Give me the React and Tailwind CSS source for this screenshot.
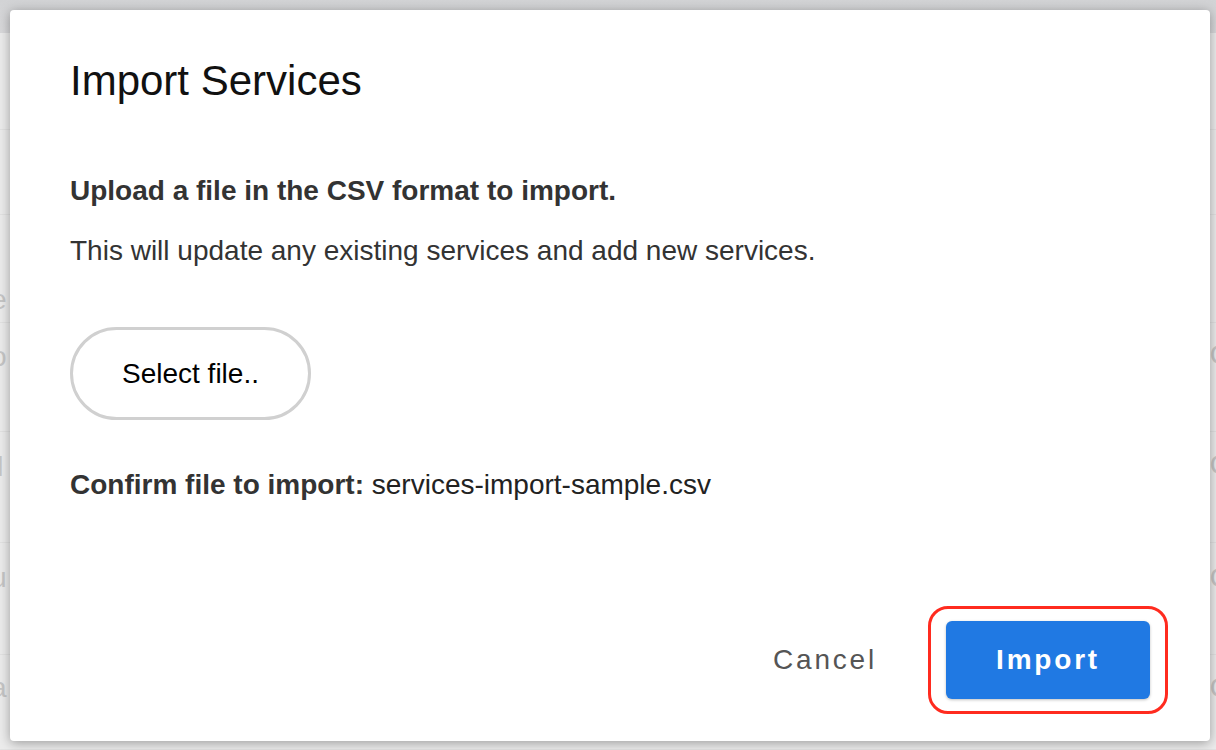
import React from "react";

// faint table behind the modal overlay; only slivers show at the edges
const rows = [
  { h: 97, left: "", right: "", lt: "mt-[20px]", rt: "mt-[20px]" },
  { h: 85, left: "", right: "", lt: "mt-[20px]", rt: "mt-[20px]" },
  { h: 108, left: "e", right: "i", lt: "mt-[71px]", rt: "mt-[21px]" },
  { h: 109, left: "o", right: "C", lt: "mt-[20px]", rt: "mt-[18px]" },
  { h: 111, left: "il", right: "C", lt: "mt-[21px]", rt: "mt-[19px]" },
  { h: 112, left: "u", right: "C", lt: "mt-[21px]", rt: "mt-[21px]" },
  { h: 95, left: "a", right: "C", lt: "mt-[19px]", rt: "mt-[19px]" },
];

function Backdrop() {
  return (
    <div className="flex flex-col w-full h-full">
      <div className="h-[33px] bg-gradient-to-b from-[#d2d3d5] to-[#d9d9db]" />
      {rows.map((r, i) => (
        <div
          key={i}
          className="flex items-start justify-between border-b border-[#e2e2e2] text-[28px] leading-none text-[#c6c6c6] overflow-hidden"
          style={{ height: r.h }}
        >
          <span className={`-ml-[9px] ${r.lt}`}>{r.left}</span>
          <span className={`-mr-[14px] ${r.rt}`}>{r.right}</span>
        </div>
      ))}
    </div>
  );
}

export default function App() {
  return (
    <div className="relative w-[1216px] h-[750px] overflow-hidden bg-[#ececec] font-['Liberation_Sans',Arial,sans-serif]">
      <Backdrop />

      {/* Dialog */}
      <div className="absolute left-[10px] top-[10px] w-[1200px] h-[731px] bg-white rounded-[4px] shadow-[0_2px_12px_rgba(0,0,0,0.35)] flex flex-col px-[60px] pt-[50px] pb-[27px]">
        <h2 className="text-[42px] leading-none text-[#111]">Import Services</h2>

        <p className="mt-[75px] text-[28px] leading-none font-bold text-[#333]">
          Upload a file in the CSV format to import.
        </p>
        <p className="mt-[32px] text-[28px] leading-none text-[#333]">
          This will update any existing services and add new services.
        </p>

        <button className="mt-[62px] w-[241px] h-[93px] rounded-full border-[3px] border-[#d0d0d0] text-[28px] text-black">
          Select file..
        </button>

        <p className="mt-[51px] text-[28px] leading-none text-[#222]">
          <span className="font-bold text-[#333]">Confirm file to import:</span>{" "}
          services-import-sample.csv
        </p>

        <div className="mt-auto flex items-center justify-end -mr-[18px]">
          <button className="mr-[48px] px-[3px] text-[28px] tracking-[0.1em] text-[#555]">
            Cancel
          </button>
          <div className="px-[15px] py-[12px] border-[3px] border-[#ff2b1f] rounded-[20px]">
            <button className="w-[204px] h-[78px] rounded-[6px] bg-[#2079e3] text-white text-[28px] font-bold tracking-[0.1em] shadow-[0_1px_3px_rgba(0,0,0,0.25)]">
              Import
            </button>
          </div>
        </div>
      </div>
    </div>
  );
}
